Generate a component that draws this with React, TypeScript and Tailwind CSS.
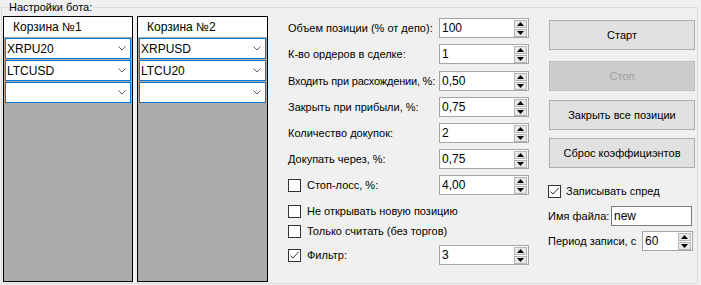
import React from "react";

const Arrow = ({ up }: { up: boolean }) => (
  <svg width="7" height="4" viewBox="0 0 7 4" className="block">
    {up ? <polygon points="0,4 7,4 3.5,0" fill="#000" /> : <polygon points="0,0 7,0 3.5,4" fill="#000" />}
  </svg>
);

const SpinButtons = () => (
  <div className="flex flex-col w-[13px] h-[17px] my-auto mr-[1px] gap-[1px]">
    <div className="flex-1 flex items-center justify-center bg-[#e8e8e8] border border-[#b5b5b5]">
      <Arrow up />
    </div>
    <div className="flex-1 flex items-center justify-center bg-[#e8e8e8] border border-[#b5b5b5]">
      <Arrow up={false} />
    </div>
  </div>
);

const Spin = ({ value, className }: { value: string; className: string }) => (
  <div className={"flex h-[20px] border border-[#a6a6a6] bg-white " + className}>
    <div className="flex-1 flex items-center pl-[2px] leading-none text-[12px]">{value}</div>
    <SpinButtons />
  </div>
);

const Check = ({ checked }: { checked?: boolean }) => (
  <div className="w-[13px] h-[13px] border border-[#333333] bg-white shrink-0 flex items-center justify-center">
    {checked && (
      <svg width="11" height="11" viewBox="0 0 11 11">
        <path d="M1.5 5.5 L4 8 L9.5 2" stroke="#333" strokeWidth="1" fill="none" />
      </svg>
    )}
  </div>
);

const Chevron = () => (
  <svg width="8" height="5" viewBox="0 0 8 5" className="block">
    <path d="M0.5 0.5 L4 4 L7.5 0.5" stroke="#606060" strokeWidth="1" fill="none" />
  </svg>
);

const Combo = ({ value }: { value: string }) => (
  <div className="h-[21px] border border-[#0078d7] bg-white flex items-center justify-between pl-[1px] pr-[4px]">
    <span className="leading-none text-[12px]">{value}</span>
    <Chevron />
  </div>
);

const Basket = ({ title, items, w }: { title: string; items: string[]; w: string }) => (
  <div className={"h-[266px] border border-black bg-[#ababab] flex flex-col " + w}>
    <div className="h-[20px] bg-white flex items-center pl-[9px] text-[12px]">{title}</div>
    <div className="mt-[1px] px-[1px] flex flex-col gap-[1px]">
      {items.map((it, i) => (
        <Combo key={i} value={it} />
      ))}
    </div>
  </div>
);

const Btn = ({ label, disabled, className }: { label: string; disabled?: boolean; className: string }) => (
  <div
    className={
      "h-[30px] w-[146px] ml-[1px] flex items-center justify-center border " +
      (disabled ? "bg-[#cccccc] border-[#bfbfbf] text-[#a0a0a0] " : "bg-[#e1e1e1] border-[#adadad] text-black ") +
      className
    }
  >
    {label}
  </div>
);

const Row = ({ label, value, className, labelClass }: { label: string; value: string; className: string; labelClass?: string }) => (
  <div className={"flex items-center h-[20px] " + className}>
    <div className={"w-[151px] whitespace-nowrap " + (labelClass || "")}>{label}</div>
    <Spin value={value} className="w-[90px]" />
  </div>
);

export default function App() {
  return (
    <div className="w-[701px] h-[285px] bg-[#f0f0f0] text-[11px] text-black font-['Liberation_Sans',Arial,sans-serif] pt-[7px] pl-[1px] relative overflow-hidden">
      <div className="relative w-[697px] h-[277px] border border-[#dcdcdc]">
        <div className="absolute left-[6px] top-[-8px] px-[1px] bg-[#f0f0f0] leading-[14px]">Настройки бота:</div>
        <div className="flex items-start pt-[8px] pl-[1px]">
          <Basket title="Корзина №1" items={["XRPU20", "LTCUSD", ""]} w="w-[130px]" />
          <div className="w-[4px]" />
          <Basket title="Корзина №2" items={["XRPUSD", "LTCU20", ""]} w="w-[131px]" />

          <div className="ml-[20px] mt-[2px] flex flex-col w-[241px]">
            <Row label="Объем позиции (% от депо):" value="100" className="" />
            <Row label="К-во ордеров в сделке:" value="1" className="mt-[6px]" />
            <Row label="Входить при расхождении, %:" value="0,50" className="mt-[7px]" labelClass="tracking-[-0.2px]" />
            <Row label="Закрыть при прибыли, %:" value="0,75" className="mt-[6px]" />
            <Row label="Количество докупок:" value="2" className="mt-[6px]" />
            <Row label="Докупать через, %:" value="0,75" className="mt-[6px]" />
            <div className="flex items-center h-[20px] mt-[6px]">
              <div className="w-[151px] flex items-center gap-[6px]">
                <Check />
                <span>Стоп-лосс, %:</span>
              </div>
              <Spin value="4,00" className="w-[90px]" />
            </div>
            <div className="flex items-center h-[20px] mt-[6px] gap-[6px]">
              <Check />
              <span>Не открывать новую позицию</span>
            </div>
            <div className="flex items-center h-[20px] gap-[6px]">
              <Check />
              <span>Только считать (без торгов)</span>
            </div>
            <div className="flex items-center h-[20px] mt-[4px]">
              <div className="w-[151px] flex items-center gap-[6px]">
                <Check checked />
                <span>Фильтр:</span>
              </div>
              <Spin value="3" className="w-[90px]" />
            </div>
          </div>

          <div className="ml-[19px] mt-[4px] flex flex-col w-[148px]">
            <Btn label="Старт" className="" />
            <Btn label="Стоп" disabled className="mt-[11px]" />
            <Btn label="Закрыть все позиции" className="mt-[9px]" />
            <Btn label="Сброс коэффициэнтов" className="mt-[8px]" />
            <div className="flex items-center gap-[5px] mt-[17px] h-[13px]">
              <Check checked />
              <span>Записывать спред</span>
            </div>
            <div className="flex items-center mt-[8px] h-[20px]">
              <span className="w-[63px] whitespace-nowrap">Имя файла:</span>
              <div className="w-[81px] h-[20px] border border-[#7a7a7a] bg-white flex items-center pl-[2px] text-[12px]">new</div>
            </div>
            <div className="flex items-center mt-[5px] h-[20px]">
              <span className="w-[94px] whitespace-nowrap">Период записи, с</span>
              <Spin value="60" className="w-[51px]" />
            </div>
          </div>
        </div>
      </div>
    </div>
  );
}
